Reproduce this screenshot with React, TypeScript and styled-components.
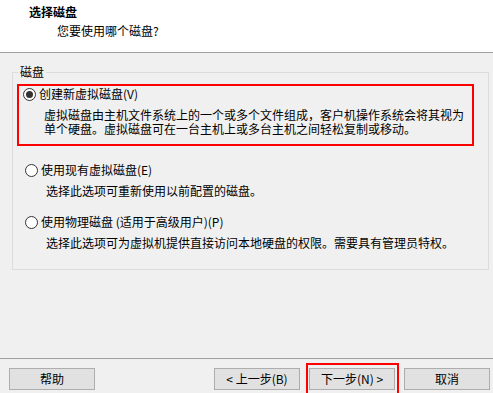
import React from "react";
import styled, { createGlobalStyle } from "styled-components";

const Global = createGlobalStyle`
  html, body { margin: 0; padding: 0; background: #f0f0f0; }
  body { font-family: "Noto Sans CJK SC", "Microsoft YaHei", sans-serif; font-size: 12px; color: #000; }
`;

const Window = styled.div`
  width: 493px;
  height: 393px;
  display: flex;
  flex-direction: column;
  background: #f0f0f0;
  overflow: hidden;
`;

const Header = styled.div`
  height: 53px;
  box-sizing: border-box;
  background: #fff;
  border-bottom: 1px solid #a0a0a0;
  padding: 4px 0 0 29px;
  display: flex;
  flex-direction: column;
  flex: none;
`;

const Title = styled.div`
  font-weight: 700;
  line-height: 16px;
`;

const Subtitle = styled.div`
  line-height: 16px;
  margin: 3px 0 0 28px;
`;

const Body = styled.div`
  flex: 1;
  padding: 19px 4px 0 12px;
`;

const GroupBox = styled.div`
  position: relative;
  box-sizing: border-box;
  width: 477px;
  height: 198px;
  border: 1px solid #dcdcdc;
  padding: 11px 0 0 0;
  display: flex;
  flex-direction: column;
`;

const Legend = styled.span`
  position: absolute;
  top: -9px;
  left: 5px;
  padding: 0 2px;
  line-height: 16px;
  background: #f0f0f0;
`;

const OptionCard = styled.div<{ $highlight?: boolean; $top: number }>`
  box-sizing: border-box;
  width: ${(p) => (p.$highlight ? "457px" : "auto")};
  margin: ${(p) => p.$top}px 0 0 ${(p) => (p.$highlight ? 4 : 6)}px;
  border: 2px solid ${(p) => (p.$highlight ? "#ff0000" : "transparent")};
  padding: 0 0 ${(p) => (p.$highlight ? 8 : 0)}px 4px;
`;

const OptionRow = styled.label`
  display: flex;
  align-items: center;
  height: 16px;
  gap: 3px;
  line-height: 16px;
`;

const Radio = styled.span<{ $checked?: boolean }>`
  position: relative;
  box-sizing: border-box;
  width: 13px;
  height: 13px;
  border-radius: 50%;
  border: 1px solid #333;
  background: #fff;
  flex: none;
  &::after {
    content: "";
    display: ${(p) => (p.$checked ? "block" : "none")};
    position: absolute;
    left: 2px;
    top: 2px;
    width: 7px;
    height: 7px;
    border-radius: 50%;
    background: #333;
  }
`;

const Desc = styled.div`
  margin: 6px 0 0 21px;
  line-height: 14px;
  white-space: nowrap;
`;

const Footer = styled.div`
  height: 35px;
  flex: none;
  box-sizing: border-box;
  border-top: 1px solid #a0a0a0;
  padding: 9px 3px 0 9px;
  display: flex;
  align-items: flex-start;
  gap: 9px;
`;

const Spacer = styled.div`
  flex: 1;
`;

const Button = styled.button<{ $highlight?: boolean }>`
  position: relative;
  box-sizing: border-box;
  width: 86px;
  height: 22px;
  margin: 0;
  padding: 0;
  background: #e1e1e1;
  border: 1px solid #adadad;
  font-family: inherit;
  font-size: 12px;
  line-height: 18px;
  color: #000;
  &::after {
    content: "";
    display: ${(p) => (p.$highlight ? "block" : "none")};
    position: absolute;
    left: -4px;
    right: -5px;
    top: -6px;
    bottom: -12px;
    border: 2px solid #ff0000;
  }
`;

export default function App() {
  return (
    <Window>
      <Global />
      <Header>
        <Title>选择磁盘</Title>
        <Subtitle>您要使用哪个磁盘?</Subtitle>
      </Header>
      <Body>
        <GroupBox>
          <Legend>磁盘</Legend>
          <OptionCard $highlight $top={0}>
            <OptionRow>
              <Radio $checked />
              创建新虚拟磁盘(V)
            </OptionRow>
            <Desc>
              虚拟磁盘由主机文件系统上的一个或多个文件组成，客户机操作系统会将其视为
              <br />
              单个硬盘。虚拟磁盘可在一台主机上或多台主机之间轻松复制或移动。
            </Desc>
          </OptionCard>
          <OptionCard $top={14}>
            <OptionRow>
              <Radio />
              使用现有虚拟磁盘(E)
            </OptionRow>
            <Desc>选择此选项可重新使用以前配置的磁盘。</Desc>
          </OptionCard>
          <OptionCard $top={12}>
            <OptionRow>
              <Radio />
              使用物理磁盘 (适用于高级用户)(P)
            </OptionRow>
            <Desc>选择此选项可为虚拟机提供直接访问本地硬盘的权限。需要具有管理员特权。</Desc>
          </OptionCard>
        </GroupBox>
      </Body>
      <Footer>
        <Button>帮助</Button>
        <Spacer />
        <Button>&lt; 上一步(B)</Button>
        <Button $highlight>下一步(N) &gt;</Button>
        <Button>取消</Button>
      </Footer>
    </Window>
  );
}
